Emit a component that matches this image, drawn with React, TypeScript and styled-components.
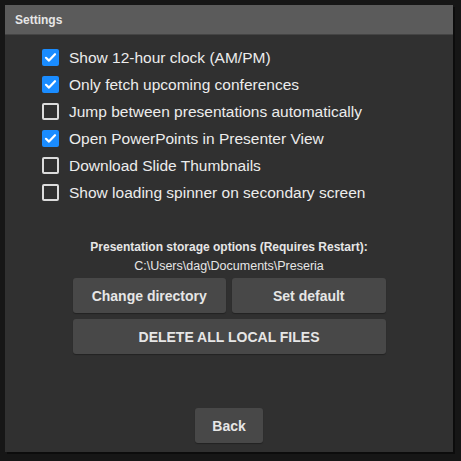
import React, { useState } from "react";
import styled, { createGlobalStyle } from "styled-components";

const GlobalStyle = createGlobalStyle`
  html, body {
    margin: 0;
    padding: 0;
    background: #161616;
    font-family: Arial, "Liberation Sans", sans-serif;
  }
`;

const Page = styled.div`
  width: 461px;
  height: 461px;
  padding: 5px;
  box-sizing: border-box;
`;

const Panel = styled.div`
  width: 448px;
  height: 447px;
  background: #303030;
  box-shadow: 2px 2px 0 #0c0c0c;
  display: flex;
  flex-direction: column;
`;

const Header = styled.div`
  height: 30px;
  box-sizing: border-box;
  background: #5b5b5b;
  border-bottom: 1px solid #444;
  display: flex;
  align-items: center;
  padding-left: 10px;
  h2 {
    margin: 0;
    font-size: 12px;
    font-weight: bold;
    color: #e6e6e6;
  }
`;

const Options = styled.div`
  display: flex;
  flex-direction: column;
  padding: 9px 0 0 37px;
`;

const Row = styled.label`
  height: 27px;
  display: flex;
  align-items: center;
  gap: 10px;
  cursor: pointer;
  color: #ececec;
  font-size: 15.5px;
`;

const Box = styled.span<{ $checked: boolean }>`
  width: 17px;
  height: 17px;
  box-sizing: border-box;
  border-radius: 2px;
  display: flex;
  align-items: center;
  justify-content: center;
  background: ${({ $checked }) => ($checked ? "#1a8cff" : "transparent")};
  border: ${({ $checked }) => ($checked ? "none" : "2px solid #dcdcdc")};
`;

const Storage = styled.div`
  margin-top: 34px;
  display: flex;
  flex-direction: column;
  align-items: center;
  color: #e6e6e6;
  h3 {
    margin: 0;
    font-size: 12px;
    font-weight: bold;
    line-height: 14px;
  }
  p {
    margin: 5px 0 0;
    font-size: 12.5px;
    line-height: 14px;
  }
`;

const ButtonGrid = styled.div`
  margin-top: 5px;
  width: 313px;
  display: grid;
  grid-template-columns: 1fr 1fr;
  gap: 6px;
`;

const Button = styled.button<{ $wide?: boolean }>`
  grid-column: ${({ $wide }) => ($wide ? "1 / span 2" : "auto")};
  height: 35px;
  border: none;
  border-radius: 3px;
  background: #484848;
  color: #e6e6e6;
  font-family: Arial, "Liberation Sans", sans-serif;
  font-size: 14px;
  font-weight: bold;
  box-shadow: 0 1px 1px rgba(0, 0, 0, 0.3);
  cursor: pointer;
`;

const Footer = styled.div`
  margin-top: auto;
  padding-bottom: 9px;
  display: flex;
  justify-content: center;
`;

const BackButton = styled(Button)`
  width: 68px;
`;

const Check = () => (
  <svg width="13" height="13" viewBox="0 0 13 13">
    <path d="M2 6.8 L5 9.6 L11 3.2" fill="none" stroke="#fff" strokeWidth="2.2" strokeLinecap="round" strokeLinejoin="round" />
  </svg>
);

const initial = [
  { label: "Show 12-hour clock (AM/PM)", on: true },
  { label: "Only fetch upcoming conferences", on: true },
  { label: "Jump between presentations automatically", on: false },
  { label: "Open PowerPoints in Presenter View", on: true },
  { label: "Download Slide Thumbnails", on: false },
  { label: "Show loading spinner on secondary screen", on: false },
];

const App = () => {
  const [opts, setOpts] = useState(initial);
  const toggle = (i: number) =>
    setOpts((o) => o.map((x, j) => (j === i ? { ...x, on: !x.on } : x)));

  return (
    <Page>
      <GlobalStyle />
      <Panel>
        <Header>
          <h2>Settings</h2>
        </Header>
        <Options>
          {opts.map((o, i) => (
            <Row key={o.label} onClick={() => toggle(i)}>
              <Box $checked={o.on}>{o.on && <Check />}</Box>
              {o.label}
            </Row>
          ))}
        </Options>
        <Storage>
          <h3>Presentation storage options (Requires Restart):</h3>
          <p>C:\Users\dag\Documents\Preseria</p>
          <ButtonGrid>
            <Button>Change directory</Button>
            <Button>Set default</Button>
            <Button $wide>DELETE ALL LOCAL FILES</Button>
          </ButtonGrid>
        </Storage>
        <Footer>
          <BackButton>Back</BackButton>
        </Footer>
      </Panel>
    </Page>
  );
};

export default App;
